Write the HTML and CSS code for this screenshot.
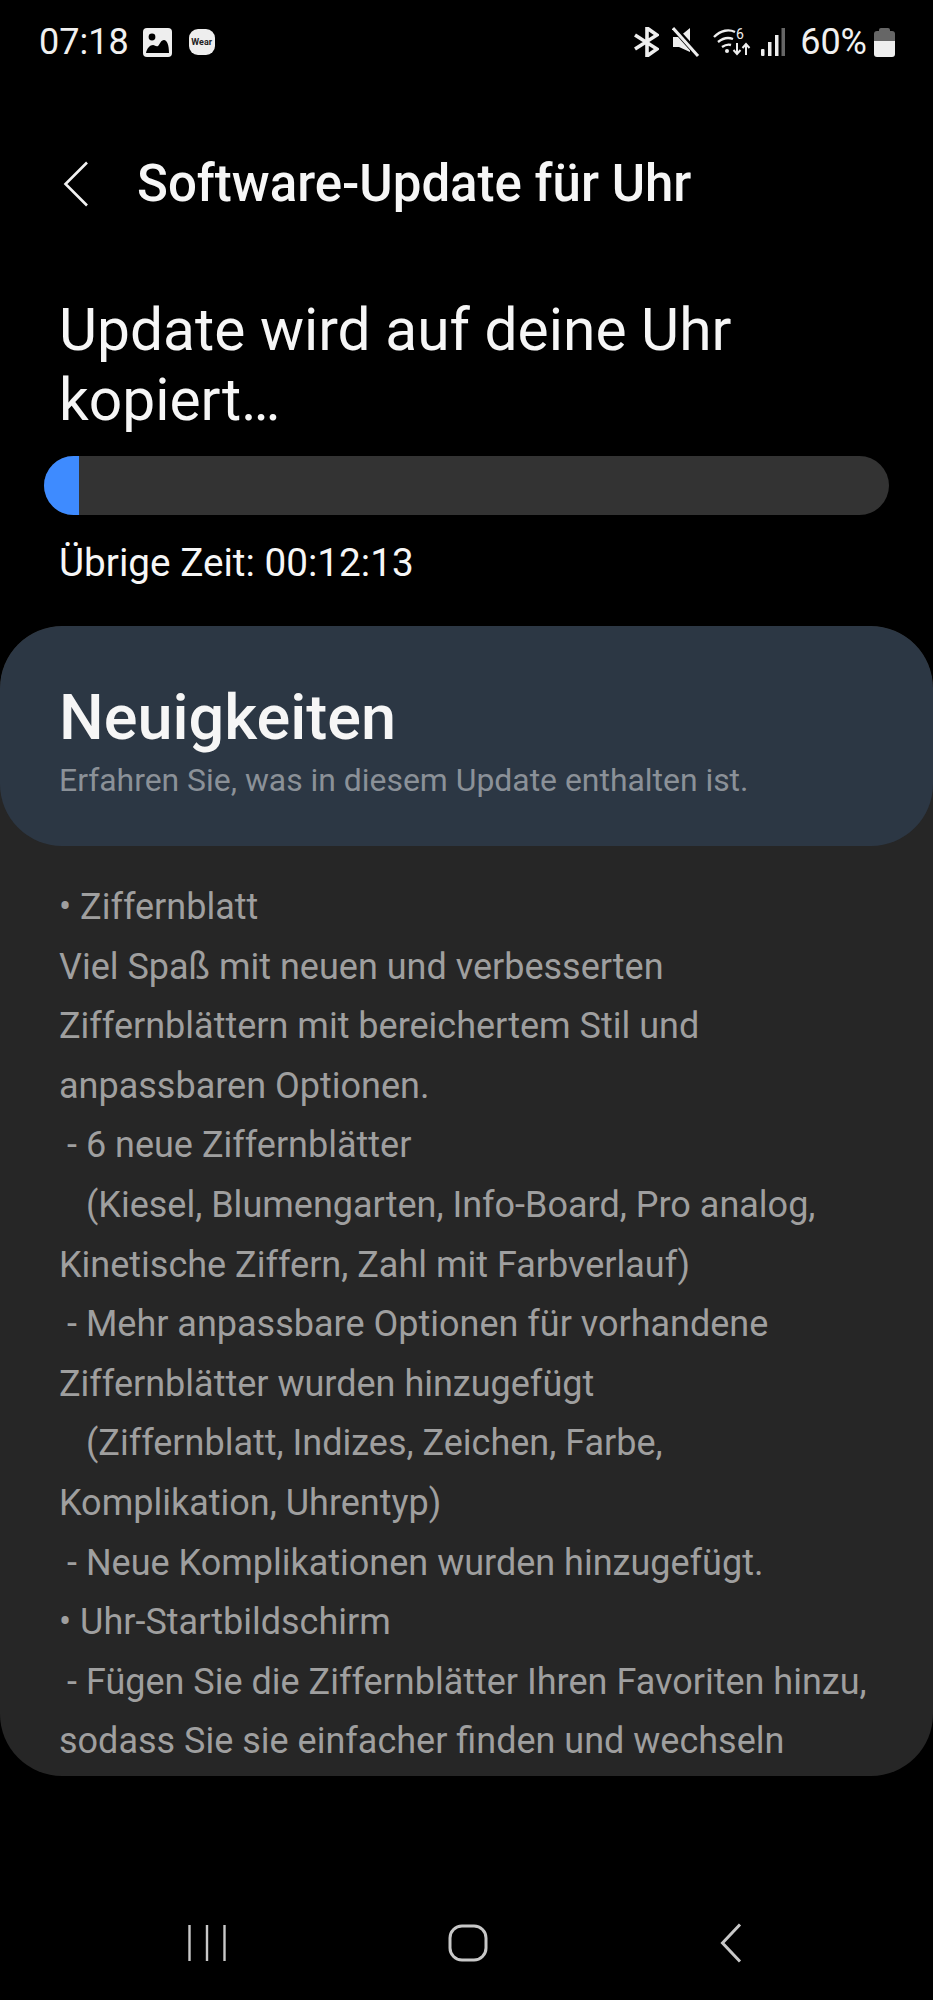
FILE: index.html
```html
<!DOCTYPE html>
<html lang="de">
<head>
    <meta charset="UTF-8">
    <meta name="viewport" content="width=device-width, initial-scale=1.0">
    <title>Software-Update für Uhr</title>
    <link rel="stylesheet" href="styles.css">
</head>
<body>
    <div class="status-bar">
        <div class="status-left">
            <span class="time">07:18</span>
            <svg class="icon-gallery" viewBox="0 0 29 29">
                <rect width="29" height="29" rx="4" fill="#eee"/>
                <circle cx="9" cy="9" r="3.4" fill="#000"/>
                <path d="M3 25c1-5 4-8 7-8 2 0 3 2 5 1 2-2 3-6 6-6 3 0 5 5 5 13z" fill="#000"/>
            </svg>
            <span class="wear-badge">Wear</span>
        </div>
        <div class="status-right">
            <svg class="icon-bt" viewBox="0 0 26 30">
                <path d="M2 8l22 14-10 7V1l10 7L2 22" fill="none" stroke="#eee" stroke-width="3.6"/>
            </svg>
            <svg class="icon-mute" viewBox="0 0 28 30">
                <path d="M1 10h6l11-9v24L7 20H1z" fill="#eee"/>
                <path d="M2 1l25 28" stroke="#000" stroke-width="6"/>
                <path d="M1 1l25 28" stroke="#eee" stroke-width="3"/>
            </svg>
            <svg class="icon-wifi" viewBox="0 0 38 30">
                <path d="M1 10c7-7 15-8 21-5M5 15c5-4 10-5 15-3M9 20c3-2 6-3 9-2" fill="none" stroke="#eee" stroke-width="2.4"/>
                <circle cx="14" cy="24" r="2" fill="#eee"/>
                <text x="23" y="12" class="wifi-six">6</text>
                <path d="M24 16v11M20.500 23l3.500 4 3.500-4M33 28V17M29.500 21l3.500-4 3.500 4" fill="none" stroke="#eee" stroke-width="2"/>
            </svg>
            <svg class="icon-signal" viewBox="0 0 25 30">
                <rect x="1" y="22" width="3.500" height="7" rx="1" fill="#eee"/>
                <rect x="8" y="15" width="3.500" height="14" fill="#eee"/>
                <rect x="15" y="8" width="3.500" height="21" fill="#eee"/>
                <rect x="21.500" y="1" width="3.500" height="28" fill="#666"/>
            </svg>
            <span class="battery-text">60%</span>
            <div class="battery">
                <div class="battery-nub"></div>
                <div class="battery-cap"></div>
                <div class="battery-body"></div>
            </div>
        </div>
    </div>

    <div class="title-row">
        <svg class="icon-back" viewBox="0 0 26 46">
            <path d="M24 1.500L2.500 23 24 44.500" fill="none" stroke="#f2f2f2" stroke-width="2.600"/>
        </svg>
        <h1>Software-Update für Uhr</h1>
    </div>

    <h2 class="update-title">Update wird auf deine Uhr kopiert…</h2>

    <div class="progress">
        <div class="progress-fill"></div>
    </div>
    <p class="time-left">Übrige Zeit: 00:12:13</p>

    <div class="news-card">
        <div class="news-head">
            <h3>Neuigkeiten</h3>
            <p>Erfahren Sie, was in diesem Update enthalten ist.</p>
        </div>
        <div class="news-body">
            <div>• Ziffernblatt</div>
            <div>Viel Spaß mit neuen und verbesserten</div>
            <div>Ziffernblättern mit bereichertem Stil und</div>
            <div>anpassbaren Optionen.</div>
            <div class="indent-1">- 6 neue Ziffernblätter</div>
            <div class="indent-2">(Kiesel, Blumengarten, Info-Board, Pro analog,</div>
            <div>Kinetische Ziffern, Zahl mit Farbverlauf)</div>
            <div class="indent-1">- Mehr anpassbare Optionen für vorhandene</div>
            <div>Ziffernblätter wurden hinzugefügt</div>
            <div class="indent-2">(Ziffernblatt, Indizes, Zeichen, Farbe,</div>
            <div>Komplikation, Uhrentyp)</div>
            <div class="indent-1">- Neue Komplikationen wurden hinzugefügt.</div>
            <div>• Uhr-Startbildschirm</div>
            <div class="indent-1">- Fügen Sie die Ziffernblätter Ihren Favoriten hinzu,</div>
            <div>sodass Sie sie einfacher finden und wechseln</div>
        </div>
    </div>

    <div class="nav-bar">
        <svg class="nav-recent" viewBox="0 0 38 38">
            <path d="M1.500 1v36M19 1v36M36.500 1v36" stroke="#c8c8c8" stroke-width="2.400"/>
        </svg>
        <svg class="nav-home" viewBox="0 0 40 38">
            <rect x="2" y="2" width="36" height="34" rx="12" fill="none" stroke="#c8c8c8" stroke-width="3"/>
        </svg>
        <svg class="nav-back" viewBox="0 0 22 40">
            <path d="M20 1.500L2.500 20 20 38.500" fill="none" stroke="#c8c8c8" stroke-width="3"/>
        </svg>
    </div>
</body>
</html>
```

FILE: styles.css
```css
* {
    box-sizing: border-box;
}
body {
    margin: 0;
    width: 933px;
    height: 2000px;
    overflow: hidden;
    background-color: #000;
    color: #f6f6f6;
    font-family: Roboto, "Liberation Sans", sans-serif;
}
h1, h2, h3, p {
    margin: 0;
}
svg {
    display: block;
    flex: none;
}

/* status bar */
.status-bar {
    display: flex;
    justify-content: space-between;
    align-items: center;
    height: 84px;
    padding: 0 38px 0 39px;
    color: #f0f0f0;
}
.status-left, .status-right {
    display: flex;
    align-items: center;
}
.time {
    font-size: 36px;
    line-height: 40px;
}
.icon-gallery {
    width: 29px;
    height: 29px;
    margin-left: 14px;
}
.wear-badge {
    width: 26px;
    height: 26px;
    margin-left: 17px;
    border-radius: 9px;
    background-color: #eee;
    color: #222;
    font-size: 9px;
    font-weight: 700;
    line-height: 26px;
    text-align: center;
}
.icon-bt {
    width: 26px;
    height: 30px;
}
.icon-mute {
    width: 28px;
    height: 30px;
    margin-left: 13px;
}
.icon-wifi {
    width: 38px;
    height: 30px;
    margin-left: 13px;
}
.wifi-six {
    fill: #eee;
    font-size: 14px;
    font-family: Roboto, sans-serif;
}
.icon-signal {
    width: 25px;
    height: 30px;
    margin-left: 9px;
}
.battery-text {
    margin-left: 15px;
    font-size: 36px;
    line-height: 40px;
}
.battery {
    width: 21px;
    height: 29px;
    margin-left: 7px;
    display: flex;
    flex-direction: column;
    align-items: center;
}
.battery-nub {
    width: 11px;
    height: 3px;
    border-radius: 2px 2px 0 0;
    background-color: #666;
}
.battery-cap {
    width: 21px;
    height: 10px;
    border-radius: 3px 3px 0 0;
    background-color: #666;
}
.battery-body {
    width: 21px;
    height: 16px;
    border-radius: 0 0 3px 3px;
    background-color: #eee;
}

/* title */
.title-row {
    display: flex;
    align-items: center;
    height: 60px;
    margin-top: 70px;
    padding-left: 63px;
}
.icon-back {
    width: 26px;
    height: 46px;
}
.title-row h1 {
    margin-left: 48px;
    font-size: 51px;
    font-weight: 500;
    line-height: 60px;
}
.update-title {
    margin-top: 81px;
    padding: 0 40px 0 59px;
    font-size: 58.700px;
    font-weight: 400;
    line-height: 70px;
}

/* progress */
.progress {
    width: 845px;
    height: 59px;
    margin: 21px 0 0 44px;
    border-radius: 30px;
    background-color: #333;
    overflow: hidden;
}
.progress-fill {
    width: 35px;
    height: 100%;
    background-color: #3e8bff;
}
.time-left {
    margin-top: 25px;
    padding-left: 59px;
    font-size: 38.700px;
    line-height: 46px;
}

/* news */
.news-card {
    height: 1150px;
    margin-top: 40px;
    border-radius: 62px;
    background-color: #262626;
    overflow: hidden;
}
.news-head {
    height: 220px;
    padding: 57px 40px 0 59px;
    border-radius: 62px;
    background-color: #2c3744;
}
.news-head h3 {
    font-size: 63px;
    font-weight: 500;
    line-height: 70px;
}
.news-head p {
    margin-top: 8px;
    color: #8b9198;
    font-size: 31.900px;
    line-height: 38px;
}
.news-body {
    padding: 32px 0 0 59px;
    color: #9f9f9f;
    font-size: 36px;
    line-height: 59.6px;
    white-space: nowrap;
}
.indent-1 {
    padding-left: 8px;
}
.indent-2 {
    padding-left: 27px;
}

/* nav */
.nav-bar {
    display: flex;
    align-items: center;
    height: 38px;
    margin-top: 148px;
    padding-left: 188px;
}
.nav-recent {
    width: 38px;
    height: 38px;
}
.nav-home {
    width: 40px;
    height: 38px;
    margin-left: 222px;
}
.nav-back {
    width: 22px;
    height: 40px;
    margin-left: 232px;
}
```
